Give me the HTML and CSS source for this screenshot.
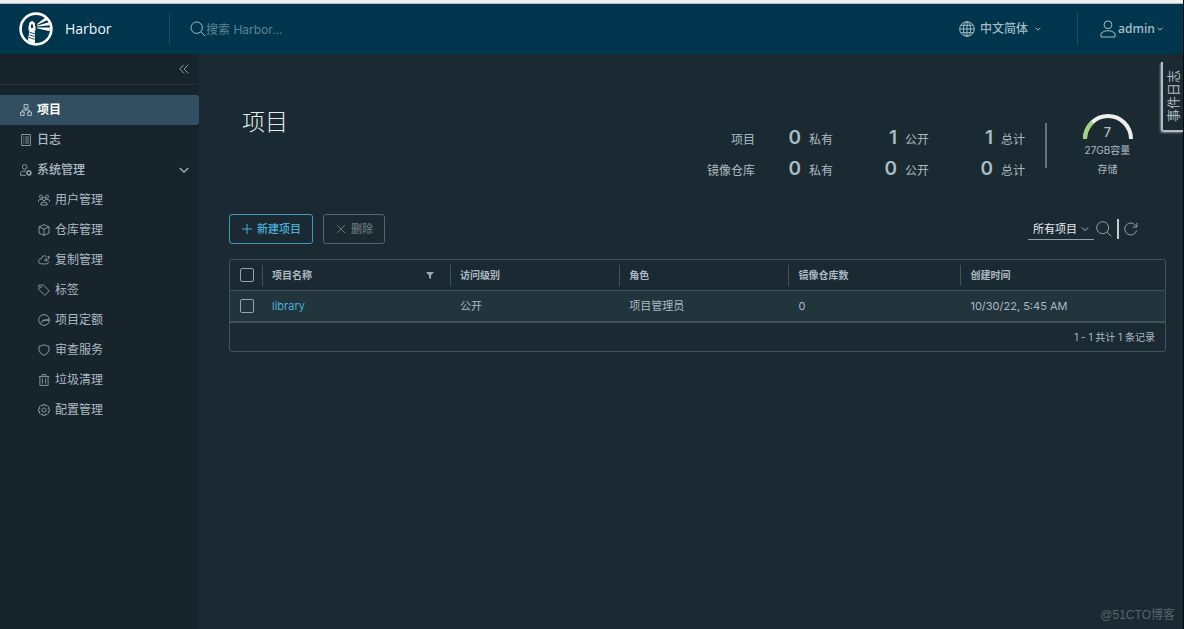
FILE: index.html
```html
<!DOCTYPE html>
<html lang="zh-CN">
<head>
<meta charset="utf-8">
<meta name="viewport" content="width=device-width, initial-scale=1">
<title>Harbor</title>
<link rel="stylesheet" href="styles.css">
</head>
<body>
<div class="top-strip"></div>
<header class="header">
  <a class="brand" href="#">
    <svg class="logo" viewBox="0 0 34 34" aria-hidden="true">
      <circle cx="17" cy="17" r="15.4" fill="none" stroke="#fff" stroke-width="2.6"/>
      <path fill="#fff" d="M10 14V11.6Q10.6 9.8 13 9q2.4.8 3 2.6V14h.5v4.6h-.8L16 31.5Q12 31 9 28.4L10.3 18.6H9.5V14z"/>
      <path d="M12 12.6h2v3.4h-2z" fill="#00364d"/>
      <path d="M10.6 20.2l4.8 1.6M10.3 22.8l5.2 1.8M10 25.4l5.7 2" stroke="#00364d" stroke-width=".9"/>
      <path fill="#fff" d="M18 12L26.6 5.6 28.4 8 18 12.9zM18 13.7L30 10.2 30.7 13.3 18 14.6zM18 15.4L31 15.6 30.6 19.2 18 16.2z"/>
    </svg>
    <span class="brand-name">Harbor</span>
  </a>
  <label class="search">
    <svg class="icon-16" viewBox="0 0 16 16" aria-hidden="true"><circle cx="6.7" cy="6.7" r="5.7"/><path d="M11 11l4.2 4.2"/></svg>
    <input class="search-input" type="text" placeholder="搜索 Harbor..." aria-label="搜索 Harbor">
  </label>
  <button class="header-button language" type="button">
    <svg class="icon-16" viewBox="0 0 16 16" aria-hidden="true"><circle cx="8" cy="8" r="7.3"/><ellipse cx="8" cy="8" rx="3.6" ry="7.3"/><path d="M8 .7v14.6M.7 8h14.6M1.8 4.3h12.4M1.8 11.7h12.4"/></svg>
    <span>中文简体</span>
    <svg class="caret" viewBox="0 0 6 6" aria-hidden="true"><path d="M.6 1.7L3 4.1l2.4-2.4"/></svg>
  </button>
  <button class="header-button account" type="button">
    <svg class="user" viewBox="0 0 16 18" aria-hidden="true"><circle cx="8" cy="4.8" r="3.9"/><path d="M1 17v-3.6Q3.6 10.6 8 10.6t7 2.8V17z"/></svg>
    <span>admin</span>
    <svg class="caret" viewBox="0 0 6 6" aria-hidden="true"><path d="M.6 1.7L3 4.1l2.4-2.4"/></svg>
  </button>
</header>

<div class="body">
  <nav class="sidebar">
    <div class="collapse-row">
      <button class="collapse" type="button" aria-label="收起">
        <svg viewBox="0 0 10 10" aria-hidden="true"><path d="M4.8.7L.8 5l4 4.3M9.2.7l-4 4.3 4 4.3"/></svg>
      </button>
    </div>
    <ul class="menu">
      <li><a class="item strong active" href="#"><svg viewBox="0 0 12 12" aria-hidden="true"><path d="M4 .6h4v3.6H4zM.6 8h3.6v3.4H.6zM7.8 8h3.6v3.4H7.8zM6 4.2v1.9M2.4 8V6.1h7.2V8"/></svg>项目</a></li>
      <li><a class="item strong" href="#"><svg viewBox="0 0 12 12" aria-hidden="true"><path d="M1.6.5h8.8v11H1.6zM3.3 3h1M5.3 3h3.5M3.3 5h1M5.3 5h3.5M3.3 7h1M5.3 7h3.5M3.3 9h1M5.3 9h3.5"/></svg>日志</a></li>
      <li>
        <a class="item strong" href="#"><svg viewBox="0 0 12 12" aria-hidden="true"><circle cx="4.7" cy="2.9" r="2.3"/><path d="M5.8 11.3H.5V8.8Q2.3 6.9 5.8 7"/><circle cx="8.9" cy="8.9" r="1.9" stroke-width="1.4"/><path d="M8.9 5.9v1M8.9 11v1M5.9 8.9h1M11 8.9h1M6.8 6.8l.7.7M10.4 10.4l.7.7M6.8 11l.7-.7M10.4 7.5l.7-.7"/></svg>系统管理<svg class="expand" viewBox="0 0 10 10" aria-hidden="true"><path d="M.8 3L5 7.2 9.2 3"/></svg></a>
        <ul class="submenu">
          <li><a class="item" href="#"><svg viewBox="0 0 12 12" aria-hidden="true"><circle cx="6" cy="4.9" r="1.7"/><path d="M2.9 11V9.2Q6 6.3 9.1 9.2V11z"/><circle cx="2.9" cy="2.6" r="1.5"/><circle cx="9.1" cy="2.6" r="1.5"/><path d="M.4 8V6.3Q1.8 5 3.6 5.5M11.6 8V6.3Q10.2 5 8.4 5.5"/></svg>用户管理</a></li>
          <li><a class="item" href="#"><svg viewBox="0 0 12 12" aria-hidden="true"><path d="M6 .6l5 2.3v6.2l-5 2.3-5-2.3V2.9zM1 2.9l5 2.3 5-2.3M6 5.2v6.2"/></svg>仓库管理</a></li>
          <li><a class="item" href="#"><svg viewBox="0 0 12 12" aria-hidden="true"><path d="M8.6 2.9Q7.5 1.4 5.6 1.9 3.5 2.5 3.4 4.7.6 4.9.5 7.2q.1 2.6 2.6 2.7h5.4q2-.2 2.2-2.1M6 6h4.5M8.3 4.2v3.6M10.7 1.7v3M9.3 3.2h2.6"/></svg>复制管理</a></li>
          <li><a class="item" href="#"><svg viewBox="0 0 12 12" aria-hidden="true"><path d="M.9 1.1h4.6l5.8 5.7-4.5 4.5L.9 5.4z"/><circle cx="3.1" cy="3.3" r=".5"/></svg>标签</a></li>
          <li><a class="item" href="#"><svg viewBox="0 0 12 12" aria-hidden="true"><circle cx="6" cy="6" r="5.4"/><path d="M2.2 9.8L5.5 6H11.3M4.3 7.3Q6.8 5.7 11 6"/></svg>项目定额</a></li>
          <li><a class="item" href="#"><svg viewBox="0 0 12 12" aria-hidden="true"><path d="M6 .6Q8 2.1 11 2.3V6q-.5 3.6-5 5.4Q1.5 9.6 1 6V2.3Q4 2.1 6 .6z"/></svg>审查服务</a></li>
          <li><a class="item" href="#"><svg viewBox="0 0 12 12" aria-hidden="true"><path d="M.8 2.6h10.4M1.9 2.6v8.8h8.2V2.6M4 2.6V.7h4v1.9M4.4 4.6v5M7.6 4.6v5"/></svg>垃圾清理</a></li>
          <li><a class="item" href="#"><svg viewBox="0 0 12 12" aria-hidden="true"><path d="M4.8.6h2.4l.4 1.4 1.3-.7 1.8 1.8L10 4.4l1.4.4v2.4L10 7.6l.7 1.3-1.8 1.8-1.3-.7-.4 1.4H4.8L4.4 10l-1.3.7-1.8-1.8L2 7.6.6 7.2V4.8L2 4.4l-.7-1.3 1.8-1.8 1.3.7z"/><circle cx="6" cy="6" r="2.1"/></svg>配置管理</a></li>
        </ul>
      </li>
    </ul>
  </nav>

  <main class="main">
    <div class="overview">
      <h1 class="title">项目</h1>
      <div class="summary">
        <div class="stats">
          <span class="stat-label">项目</span>
          <b>0</b><span>私有</span><b>1</b><span>公开</span><b>1</b><span>总计</span>
          <span class="stat-label">镜像仓库</span>
          <b>0</b><span>私有</span><b>0</b><span>公开</span><b>0</b><span>总计</span>
        </div>
        <div class="storage">
          <div class="gauge">
            <svg viewBox="0 0 50 25" aria-hidden="true"><path d="M2 25a23 23 0 0 1 46 0" stroke="#eee"/><path d="M2 25A23 23 0 0 1 9.3 8.2" stroke="#a3d07a"/></svg>
            <span class="gauge-value">7</span>
          </div>
          <span class="capacity">27GB容量</span>
          <span class="storage-name">存储</span>
        </div>
      </div>
    </div>

    <div class="toolbar">
      <button class="button primary" type="button"><svg viewBox="0 0 10 10" aria-hidden="true"><path d="M5 0v10M0 5h10"/></svg>新建项目</button>
      <button class="button" type="button" disabled><svg viewBox="0 0 10 10" aria-hidden="true"><path d="M1 1l8 8M9 1L1 9"/></svg>删除</button>
      <div class="filters">
        <div class="select">
          <select aria-label="项目类型"><option>所有项目</option></select>
          <svg class="select-caret" viewBox="0 0 8 8" aria-hidden="true"><path d="M.8 2.4L4 5.6l3.2-3.2"/></svg>
        </div>
        <button class="icon-button" type="button" aria-label="搜索"><svg class="icon-16" viewBox="0 0 16 16" aria-hidden="true"><circle cx="6.7" cy="6.7" r="6"/><path d="M11 11l4.4 4.4"/></svg></button>
        <span class="bar"></span>
        <button class="icon-button" type="button" aria-label="刷新"><svg class="icon-14" viewBox="0 0 14 14" aria-hidden="true"><path d="M12.6 8.4A6 6 0 1 1 11.5 3.3L12.8 4.8M12.9.8v4.3H8.8"/></svg></button>
      </div>
    </div>

    <div class="grid">
      <table>
        <colgroup><col class="c-check"><col class="c-name"><col class="c-access"><col class="c-role"><col class="c-repos"><col></colgroup>
        <thead>
          <tr>
            <th><input type="checkbox" aria-label="全选"></th>
            <th><div class="name-head">项目名称<button class="icon-button" type="button" aria-label="筛选"><svg class="funnel" viewBox="0 0 8 8" aria-hidden="true"><path d="M0 1h8L5 4.4V8L3 7V4.4z"/></svg></button></div></th>
            <th>访问级别</th><th>角色</th><th>镜像仓库数</th><th>创建时间</th>
          </tr>
        </thead>
        <tbody>
          <tr>
            <td><input type="checkbox" aria-label="选择 library"></td>
            <td><a href="#">library</a></td><td>公开</td><td>项目管理员</td><td>0</td><td>10/30/22, 5:45 AM</td>
          </tr>
        </tbody>
        <tfoot><tr><td colspan="6">1 - 1 共计 1 条记录</td></tr></tfoot>
      </table>
    </div>
    <button class="event-tab" type="button"><span>事件日志</span></button>
    <div class="watermark">@51CTO博客</div>
  </main>
</div>
</body>
</html>
```

FILE: styles.css
```css
* { box-sizing: border-box; }

body {
  margin: 0;
  min-height: 100vh;
  display: flex;
  flex-direction: column;
  border-right: 1px solid #05090c;
  background: #1b2a32;
  color: #acbac3;
  font: 12px/16px Inter, "Noto Sans CJK SC", sans-serif;
}

button, input, select { font: inherit; color: inherit; }
button { padding: 0; border: 0; background: none; }
a { color: inherit; text-decoration: none; }
ul { margin: 0; padding: 0; list-style: none; }
svg { display: block; flex: none; fill: none; stroke: currentColor; }

.icon-16 { width: 16px; height: 16px; }
.icon-14 { width: 14px; height: 14px; }
.caret { width: 6px; height: 6px; }

.top-strip {
  height: 4px;
  background: #f1eff0;
  border-bottom: 1px solid #b4bdc2;
}

.header {
  display: flex;
  align-items: center;
  height: 50px;
  background: #00364d;
  color: #a5bac4;
}
.brand {
  display: flex;
  align-items: center;
  gap: 12px;
  width: 170px;
  height: 32px;
  padding-left: 19px;
  border-right: 1px solid #1c4d60;
}
.logo { width: 34px; height: 34px; stroke: none; }
.brand-name { color: #f2f6f8; font: 14px/20px "Open Sans", sans-serif; }
.search {
  display: flex;
  align-items: center;
  flex: 1;
  padding-left: 20px;
}
.search-input {
  width: 160px;
  padding: 2px 0 0;
  border: 0;
  outline: 0;
  background: none;
}
.search-input::placeholder { color: #5f8292; opacity: 1; }
.header-button { display: flex; align-items: center; height: 32px; }
.language { gap: 5px; width: 118px; font-weight: 500; }
.language .caret { margin-left: 2px; }
.account {
  gap: 2px;
  width: 106px;
  padding-left: 22px;
  border-left: 1px solid #1c4d60;
  font: 600 12px/16px "Open Sans", sans-serif;
}
.user { width: 16px; height: 18px; }

.body { display: flex; flex: 1; }

.sidebar { flex: none; width: 199px; background: #17242b; }
.collapse-row {
  display: flex;
  justify-content: flex-end;
  align-items: center;
  height: 31px;
  padding-right: 10px;
  border-bottom: 1px solid #23323a;
  color: #8b9aa3;
}
.collapse svg { width: 10px; height: 10px; }
.menu { padding-top: 10px; }
.item {
  display: flex;
  align-items: center;
  gap: 5px;
  height: 30px;
  padding: 0 10px 0 20px;
}
.item svg { width: 12px; height: 12px; stroke: #93a1a9; stroke-width: 0.9; }
.item .expand { width: 10px; height: 10px; margin-left: auto; stroke: #acbac3; stroke-width: 1.3; }
.submenu .item { padding-left: 38px; }
.strong { font-weight: 500; }
.active {
  border-radius: 0 3px 3px 0;
  background: #324f62;
  color: #fff;
  font-weight: 700;
}
.active svg { stroke: #c2ced5; }

.main {
  position: relative;
  flex: 1;
  min-width: 0;
  padding: 53px 17px 0 30px;
}
.overview {
  display: flex;
  justify-content: space-between;
  align-items: flex-start;
  height: 107px;
  padding: 0 34px 0 13px;
}
.title {
  margin: 0;
  color: #e4e9ec;
  font-size: 23px;
  font-weight: 300;
  line-height: 30px;
}
.summary { display: flex; padding-top: 7px; }
.stats {
  display: grid;
  grid-template-columns: 48px 38px 24px 56px 24px 56px 24px;
  grid-auto-rows: 31px;
  column-gap: 8px;
  align-items: baseline;
  padding-top: 12px;
}
.stats b { font-size: 19px; line-height: 24px; font-weight: 600; text-align: right; }
.stat-label { text-align: right; }
.storage {
  display: flex;
  flex-direction: column;
  align-items: center;
  width: 87px;
  margin-left: 20px;
  padding-left: 38px;
  background: linear-gradient(#66737b, #66737b) left 9px / 2px 45px no-repeat;
}
.gauge { position: relative; width: 50px; height: 25px; }
.gauge svg { width: 50px; height: 25px; stroke-width: 4; }
.gauge-value {
  position: absolute;
  inset: 10px 0 0;
  font-size: 13px;
  font-weight: 500;
  text-align: center;
}
.capacity, .storage-name {
  margin-top: 3px;
  font-size: 10px;
  line-height: 16px;
  white-space: nowrap;
}

.toolbar { display: flex; gap: 10px; height: 30px; }
.button {
  display: flex;
  align-items: center;
  gap: 5px;
  height: 30px;
  padding: 0 11px 0 12px;
  border: 1px solid #56646c;
  border-radius: 3px;
  color: #67737a;
  font-size: 11px;
  font-weight: 500;
}
.button svg { width: 10px; height: 10px; }
.primary { border-color: #3f9ac0; color: #49afd9; }
.filters { display: flex; align-items: center; margin-left: auto; padding-right: 28px; }
.select { position: relative; width: 66px; margin-right: 2px; }
.select select {
  width: 100%;
  height: 21px;
  padding: 0 0 0 5px;
  appearance: none;
  border: 0;
  border-bottom: 1px solid #8fa0aa;
  border-radius: 0;
  background: none;
  color: #e9ecef;
  font-size: 11px;
}
.select-caret {
  position: absolute;
  right: 5px;
  top: 6px;
  width: 8px;
  height: 8px;
  pointer-events: none;
}
.icon-button { color: #8fa0aa; }
.bar { width: 2px; height: 20px; margin: 0 5px; background: #c4ccd1; }

.grid { margin-top: 15px; border: 1px solid #42525b; border-radius: 3px; }
.grid table { width: 100%; table-layout: fixed; border-collapse: separate; border-spacing: 0; font-size: 11px; }
.c-check { width: 32px; }
.c-name { width: 20.1%; }
.c-access, .c-role { width: 18.1%; }
.c-repos { width: 18.4%; }
.grid th, .grid td { height: 30px; padding: 0 10px; text-align: left; line-height: 16px; }
.grid th { font-size: 10px; }
.grid th + th { background: linear-gradient(#42525b, #42525b) left center / 1px 21px no-repeat; }
.grid input {
  display: block;
  width: 14px;
  height: 14px;
  margin: 0;
  appearance: none;
  border: 1px solid #95a5ae;
  border-radius: 2px;
}
.grid th:first-child, .grid tbody td:first-child { padding-right: 0; }
.grid tbody td { height: 31px; border-top: 1px solid #42525b; background: #22343c; }
.grid tbody a { color: #49afd9; }
.grid .name-head { display: flex; justify-content: space-between; align-items: center; padding-right: 6px; }
.grid tfoot td { border-top: 2px solid #42525b; text-align: right; font-size: 10px; }
.funnel { width: 8px; height: 8px; fill: #9aa8b0; stroke: none; }

.event-tab {
  position: absolute;
  top: 8px;
  right: 0;
  width: 22px;
  height: 70px;
  border-left: 2px solid #b3bcc1;
  border-bottom: 2px solid #b3bcc1;
  border-bottom-left-radius: 3px;
  box-shadow: -1px 1px 2px #7a868d;
  font-size: 13px;
}
.event-tab span { display: block; writing-mode: vertical-rl; text-orientation: sideways; transform: rotate(180deg); line-height: 20px; }
.watermark {
  position: absolute;
  right: 8px;
  bottom: 6px;
  color: #58646b;
  font: 12px/16px "Liberation Sans", "Noto Sans CJK SC", sans-serif;
}
```
